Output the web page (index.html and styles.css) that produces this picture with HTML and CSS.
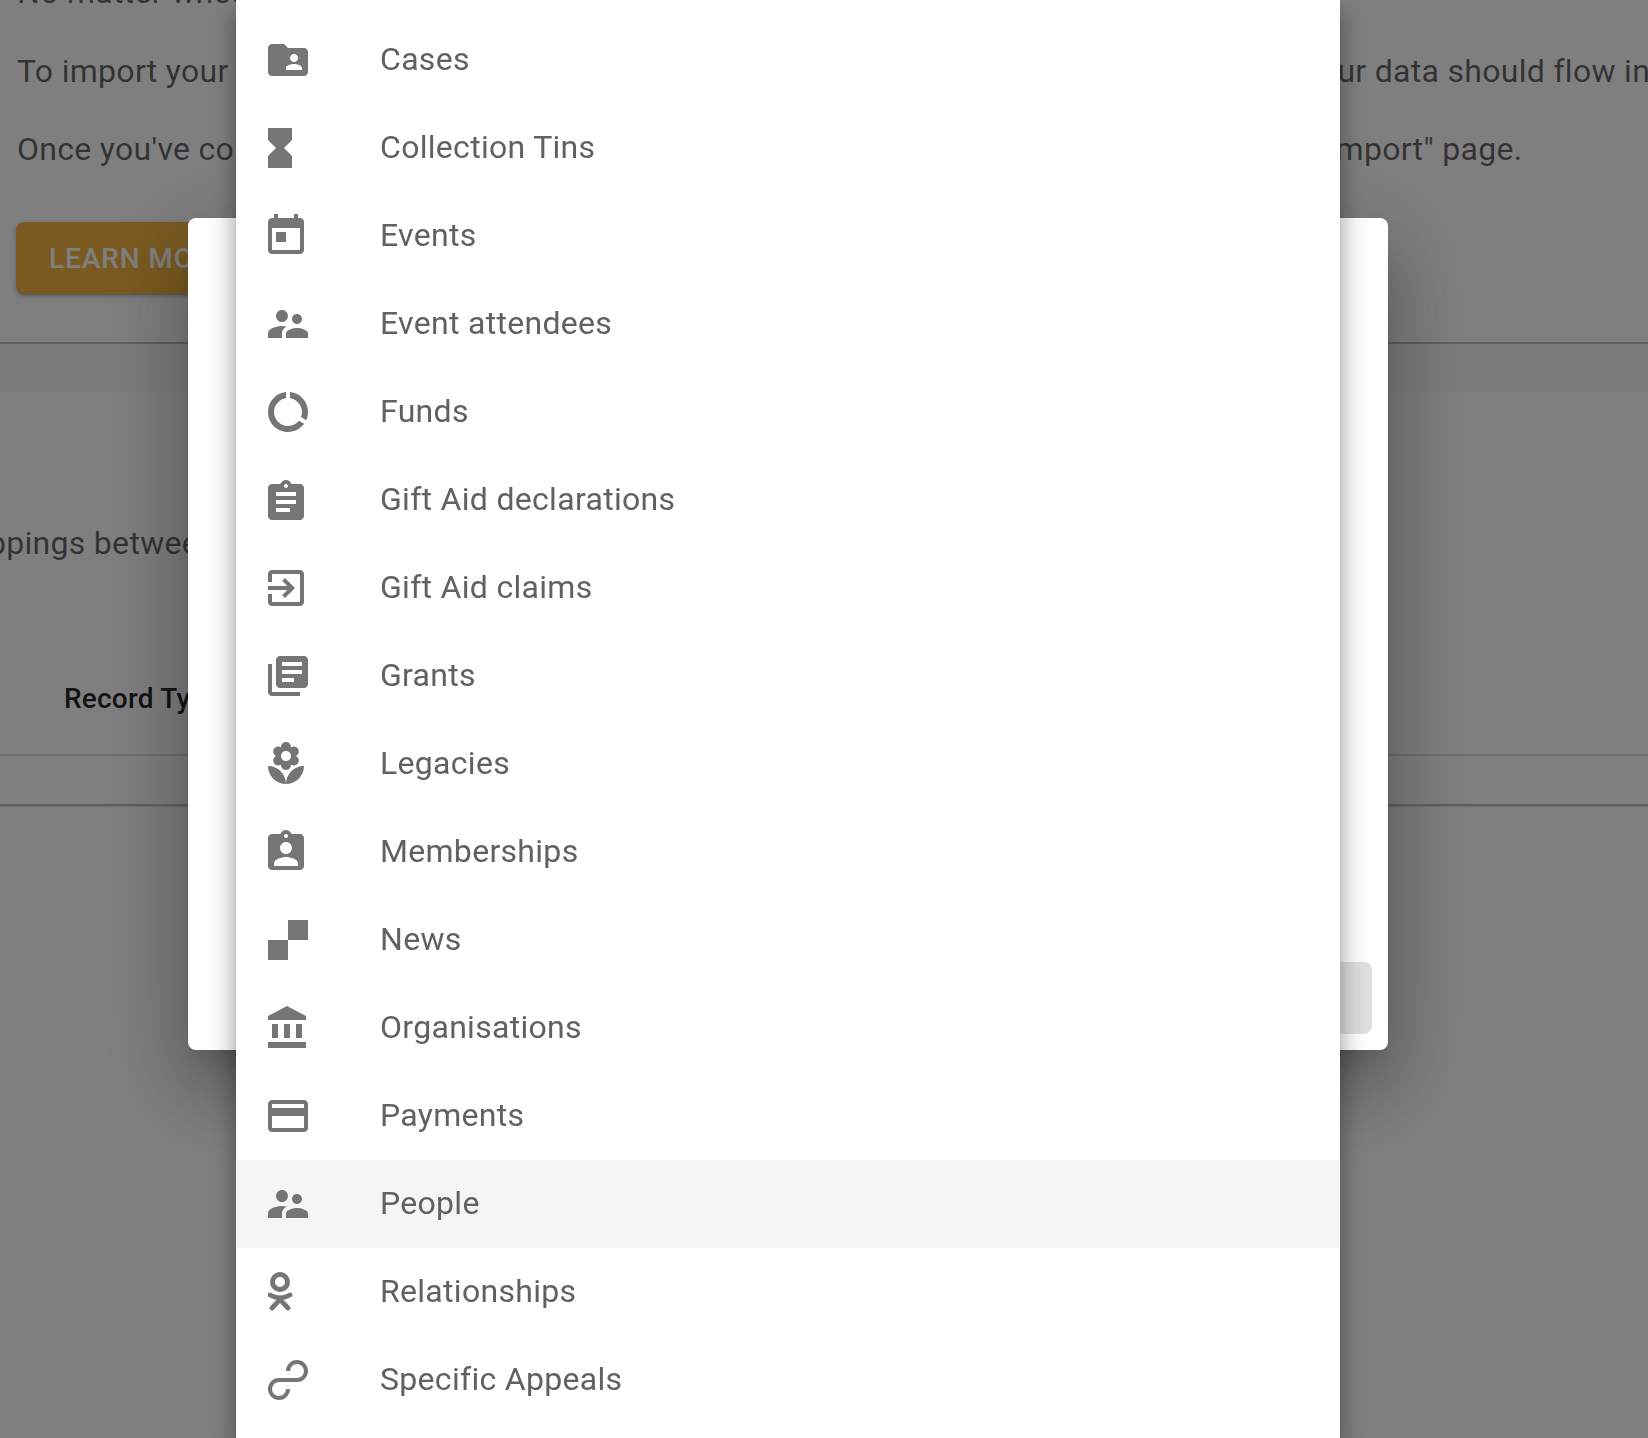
FILE: index.html
```html
<!DOCTYPE html>
<html lang="en">
<head>
<meta charset="utf-8">
<title>Import</title>
<link rel="stylesheet" href="styles.css">
</head>
<body>
<main class="page">
  <section class="intro">
    <p class="line line-first"><span>No matter whether you are importing a new data set or updating your existing records.</span></p>
    <p class="line line-a"><span>To import your</span><span>your data should flow in</span></p>
    <p class="line line-b"><span>Once you've completed</span><span>Import" page.</span></p>
    <button class="learn" type="button">LEARN MORE</button>
  </section>
  <div class="band"></div>
  <section class="mappings">
    <p class="line line-c"><span>Mappings between</span></p>
    <div class="table-head"><span>Record Type</span></div>
  </section>
</main>

<div class="scrim"></div>
<div class="dialog"><div class="dialog-button"></div></div>

<ul class="menu">
  <li class="item"><svg class="ico" viewBox="2 0 24 24"><path d="M20 6h-8l-2-2H4c-1.1 0-1.99.9-1.99 2L2 18c0 1.1.9 2 2 2h16c1.1 0 2-.9 2-2V8c0-1.1-.9-2-2-2zm-5 3c1.1 0 2 .9 2 2s-.9 2-2 2-2-.9-2-2 .9-2 2-2zm4 8h-8v-1c0-1.33 2.67-2 4-2s4 .67 4 2v1z"/></svg><span>Cases</span></li>
  <li class="item"><svg class="ico" viewBox="6 0 24 24"><path d="M6 2v6h.01L6 8.01 10 12l-4 4 .01.01H6V22h12v-5.99h-.01L18 16l-4-4 4-3.99-.01-.01H18V2H6z"/></svg><span>Collection Tins</span></li>
  <li class="item"><svg class="ico" viewBox="3 0 24 24"><path d="M19 3h-1V1h-2v2H8V1H6v2H5c-1.11 0-1.99.9-1.99 2L3 19c0 1.1.89 2 2 2h14c1.1 0 2-.9 2-2V5c0-1.1-.9-2-2-2zm0 16H5V8h14v11zM7 10h5v5H7z"/></svg><span>Events</span></li>
  <li class="item"><svg class="ico" viewBox="2 0 24 24"><path d="M16.5 12c1.38 0 2.49-1.12 2.49-2.5S17.88 7 16.5 7C15.12 7 14 8.12 14 9.5s1.12 2.5 2.5 2.5zM9 11c1.66 0 2.99-1.34 2.99-3S10.66 5 9 5C7.34 5 6 6.34 6 8s1.34 3 3 3zm7.5 3c-1.83 0-5.5.92-5.5 2.75V19h11v-2.25c0-1.83-3.67-2.75-5.5-2.75zM9 13c-2.33 0-7 1.17-7 3.5V19h7v-2.25c0-.85.33-2.34 2.37-3.47C10.5 13.1 9.66 13 9 13z"/></svg><span>Event attendees</span></li>
  <li class="item"><svg class="ico" viewBox="2 0 24 24"><path d="M13 2.05v3.03c3.39.49 6 3.39 6 6.92 0 .9-.18 1.75-.48 2.54l2.6 1.53c.56-1.24.88-2.62.88-4.07 0-5.18-3.95-9.45-9-9.95zM12 19c-3.87 0-7-3.13-7-7 0-3.53 2.61-6.43 6-6.92V2.05c-5.06.5-9 4.76-9 9.95 0 5.52 4.47 10 9.99 10 3.31 0 6.24-1.61 8.06-4.09l-2.6-1.53C16.17 17.98 14.21 19 12 19z"/></svg><span>Funds</span></li>
  <li class="item"><svg class="ico" viewBox="3 -1 24 24"><path d="M19 3h-4.18C14.4 1.84 13.3 1 12 1c-1.3 0-2.4.84-2.82 2H5c-1.1 0-2 .9-2 2v14c0 1.1.9 2 2 2h14c1.1 0 2-.9 2-2V5c0-1.1-.9-2-2-2zm-7 0c.55 0 1 .45 1 1s-.45 1-1 1-1-.45-1-1 .45-1 1-1zm2 14H7v-2h7v2zm3-4H7v-2h10v2zm0-4H7V7h10v2z"/></svg><span>Gift Aid declarations</span></li>
  <li class="item"><svg class="ico" viewBox="3 0 24 24"><path d="M10.09 15.59L11.5 17l5-5-5-5-1.41 1.41L12.67 11H3v2h9.67l-2.58 2.59zM19 3H5c-1.11 0-2 .9-2 2v4h2V5h14v14H5v-4H3v4c0 1.1.89 2 2 2h14c1.1 0 2-.9 2-2V5c0-1.1-.9-2-2-2z"/></svg><span>Gift Aid claims</span></li>
  <li class="item"><svg class="ico" viewBox="2 0 24 24"><path d="M4 6H2v14c0 1.1.9 2 2 2h14v-2H4V6zm16-4H8c-1.1 0-2 .9-2 2v12c0 1.1.9 2 2 2h12c1.1 0 2-.9 2-2V4c0-1.1-.9-2-2-2zm-1 9H9V9h10v2zm-4 4H9v-2h6v2zm4-8H9V5h10v2z"/></svg><span>Grants</span></li>
  <li class="item"><svg class="ico" viewBox="3 0 24 24"><path d="M12 22c4.97 0 9-4.03 9-9-4.97 0-9 4.03-9 9zM5.6 10.25c0 1.38 1.12 2.5 2.5 2.5.53 0 1.01-.16 1.42-.44l-.02.19c0 1.38 1.12 2.5 2.5 2.5s2.5-1.12 2.5-2.5l-.02-.19c.4.28.89.44 1.42.44 1.38 0 2.5-1.12 2.5-2.5 0-1-.59-1.85-1.43-2.25.84-.4 1.43-1.25 1.43-2.25 0-1.38-1.12-2.5-2.5-2.5-.53 0-1.01.16-1.42.44l.02-.19C14.5 2.12 13.38 1 12 1S9.5 2.12 9.5 3.5l.02.19c-.4-.28-.89-.44-1.42-.44-1.38 0-2.5 1.12-2.5 2.5 0 1 .59 1.85 1.43 2.25-.84.4-1.43 1.25-1.43 2.25zM12 5.5c1.38 0 2.5 1.12 2.5 2.5s-1.12 2.5-2.5 2.5S9.5 9.38 9.5 8s1.12-2.5 2.5-2.5zM3 13c0 4.97 4.03 9 9 9 0-4.97-4.03-9-9-9z"/></svg><span>Legacies</span></li>
  <li class="item"><svg class="ico" viewBox="3 0 24 24"><path d="M19 3h-4.18C14.4 1.84 13.3 1 12 1c-1.3 0-2.4.84-2.82 2H5c-1.1 0-2 .9-2 2v14c0 1.1.9 2 2 2h14c1.1 0 2-.9 2-2V5c0-1.1-.9-2-2-2zm-7 0c.55 0 1 .45 1 1s-.45 1-1 1-1-.45-1-1 .45-1 1-1zm0 4c1.66 0 3 1.34 3 3s-1.34 3-3 3-3-1.34-3-3 1.34-3 3-3zm6 12H6v-1.4c0-2 4-3.1 6-3.1s6 1.1 6 3.1V19z"/></svg><span>Memberships</span></li>
  <li class="item"><svg class="ico" viewBox="2 0 24 24"><path d="M2 12h10v10H2zM12 2h10v10H12z"/></svg><span>News</span></li>
  <li class="item"><svg class="ico" viewBox="2 0 24 24"><path d="M4 10v7h3v-7H4zm6 0v7h3v-7h-3zM2 22h19v-3H2v3zm14-12v7h3v-7h-3zm-4.5-9L2 6v2h19V6l-9.5-5z"/></svg><span>Organisations</span></li>
  <li class="item"><svg class="ico" viewBox="2 0 24 24"><path d="M20 4H4c-1.11 0-1.99.89-1.99 2L2 18c0 1.11.89 2 2 2h16c1.11 0 2-.89 2-2V6c0-1.11-.89-2-2-2zm0 14H4v-6h16v6zm0-10H4V6h16v2z"/></svg><span>Payments</span></li>
  <li class="item item-active"><svg class="ico" viewBox="2 0 24 24"><path d="M16.5 12c1.38 0 2.49-1.12 2.49-2.5S17.88 7 16.5 7C15.12 7 14 8.12 14 9.5s1.12 2.5 2.5 2.5zM9 11c1.66 0 2.99-1.34 2.99-3S10.66 5 9 5C7.34 5 6 6.34 6 8s1.34 3 3 3zm7.5 3c-1.83 0-5.5.92-5.5 2.75V19h11v-2.25c0-1.83-3.67-2.75-5.5-2.75zM9 13c-2.33 0-7 1.17-7 3.5V19h7v-2.25c0-.85.33-2.34 2.37-3.47C10.5 13.1 9.66 13 9 13z"/></svg><span>People</span></li>
  <li class="item"><svg class="ico ico-line" viewBox="6 0 24 24"><circle cx="12" cy="7" r="3.75" stroke-width="2.5"/><path d="M7 13.5c3.2 1.9 6.8 1.9 10 0M12 15.8l-4 4.2M12 15.8l4 4.2" stroke-linecap="round" stroke-width="2.4"/></svg><span>Relationships</span></li>
  <li class="item"><svg class="ico ico-line" viewBox="2 0 24 24"><path d="M12 7.5a4.5 4.5 0 1 1 4.5 4.5H7.5a4.5 4.5 0 1 0 4.5 4.5"/></svg><span>Specific Appeals</span></li>
</ul>
</body>
</html>
```

FILE: styles.css
```css
html, body {
  margin: 0;
  height: 100%;
  overflow: hidden;
}
body {
  background: #fff;
  font-family: Roboto, "Liberation Sans", sans-serif;
  color: rgba(0, 0, 0, 0.6);
}
.page {
  height: 1438px;
  overflow: hidden;
}
.intro {
  height: 374px;
  margin-top: -32px;
  border-bottom: 2px solid rgba(0, 0, 0, 0.25);
  box-shadow: 0 1px 1px rgba(0, 0, 0, 0.1);
  padding-left: 17px;
}
.line {
  margin: 0;
  font-size: 32px;
  line-height: 48px;
  letter-spacing: 0.3px;
  white-space: nowrap;
  display: flex;
}
.line-first { height: 48px; margin-bottom: 31px; }
.line-a { gap: 1075px; height: 48px; margin-bottom: 30px; }
.line-b { gap: 974px; height: 48px; }
.learn {
  display: block;
  width: 260px;
  height: 72px;
  margin-top: 49px;
  margin-left: -1px;
  padding: 0 33px;
  border: 0;
  border-radius: 8px;
  background: #f5b540;
  color: #fff;
  font: 500 28px Roboto, sans-serif;
  letter-spacing: 0.9px;
  text-align: left;
  box-shadow: 0 3px 2px -2px rgba(0,0,0,.2), 0 2px 4px 0 rgba(0,0,0,.14), 0 2px 10px 0 rgba(0,0,0,.12);
}
.band {
  height: 48px;
  background: #f9f9f9;
}
.mappings {
  height: 414px;
  background: #fff;
  border-bottom: 2px solid rgba(0, 0, 0, 0.25);
  box-shadow: 0 1px 1px rgba(0, 0, 0, 0.1);
  box-sizing: border-box;
}
.line-c {
  padding-top: 127px;
  margin-left: -58px;
}
.table-head {
  box-sizing: border-box;
  height: 74px;
  margin-top: 115px;
  padding-left: 64px;
  font-size: 28px;
  font-weight: 500;
  letter-spacing: 0.2px;
  color: rgba(0,0,0,.87);
  border-bottom: 2px solid rgba(0,0,0,.125);
}
.scrim {
  position: fixed;
  inset: 0;
  background: rgba(0, 0, 0, 0.5);
}
.dialog {
  position: fixed;
  left: 188px;
  top: 218px;
  width: 1200px;
  height: 832px;
  background: #fff;
  border-radius: 8px;
  box-shadow: 0 22px 30px -14px rgba(0,0,0,.2), 0 48px 76px 6px rgba(0,0,0,.18), 0 18px 92px 16px rgba(0,0,0,.14);
}
.dialog-button {
  position: absolute;
  right: 16px;
  bottom: 16px;
  width: 200px;
  height: 72px;
  border-radius: 8px;
  background: #e0e0e0;
}
.menu {
  position: fixed;
  left: 236px;
  top: 0;
  bottom: 0;
  width: 1104px;
  margin: 0;
  padding: 16px 0 0;
  list-style: none;
  background: #fff;
  overflow: hidden;
  box-shadow: 0 10px 10px -6px rgba(0,0,0,.2), 0 16px 20px 2px rgba(0,0,0,.2), 0 6px 28px 4px rgba(0,0,0,.16);
}
.item {
  display: flex;
  align-items: center;
  height: 88px;
  padding-left: 32px;
  font-size: 32px;
  letter-spacing: 0.3px;
  color: #616161;
}
.item span { padding-bottom: 2px; }
.item-active { background: #f5f5f5; }
.ico {
  width: 48px;
  height: 48px;
  flex: none;
  margin-right: 64px;
  fill: #757575;
}
.ico-line {
  fill: none;
  stroke: #757575;
  stroke-width: 2;
}
```
